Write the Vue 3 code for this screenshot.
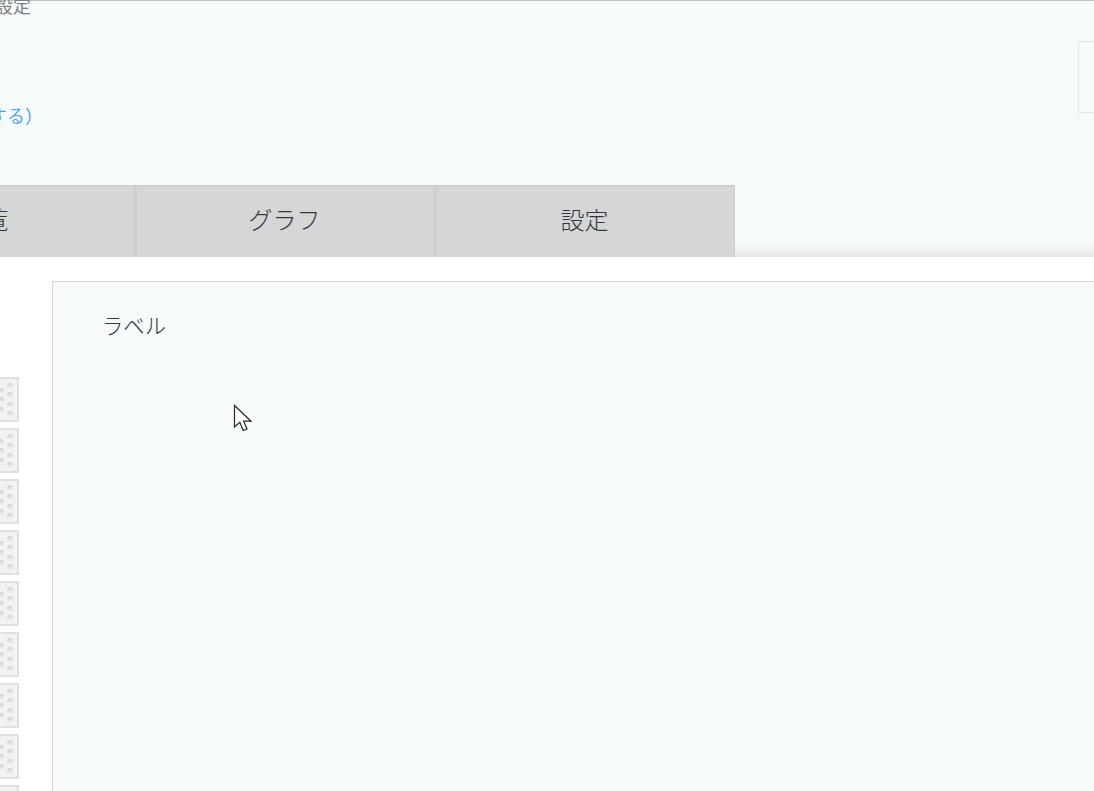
<script setup>
const handles = Array.from({ length: 9 }, (_, i) => i)
const leftDots = [0, 1, 2]
const rightDots = [0, 1, 2, 3]
const tabs = ['一覧', 'グラフ', '設定']
</script>

<template>
  <div class="page">
    <header class="header">
      <div class="top">
        <div class="info">
          <div class="setting">設定</div>
          <a class="link">変更する）</a>
        </div>
        <div class="box"></div>
      </div>
      <nav class="tabs">
        <div v-for="t in tabs" :key="t" class="tab"><span class="tab-text">{{ t }}</span></div>
      </nav>
    </header>
    <main class="body">
      <aside class="side">
        <div v-for="h in handles" :key="h" class="handle">
          <div class="col col-left"><span v-for="d in leftDots" :key="d" class="dot"></span></div>
          <div class="col"><span v-for="d in rightDots" :key="d" class="dot"></span></div>
        </div>
      </aside>
      <section class="panel">
        <div class="label">ラベル</div>
      </section>
    </main>
    <svg class="cursor" width="20" height="29" viewBox="0 0 20 29">
      <path d="M1.5 1.5V23L6.8 18.2L10.2 26.5L14 25L10.6 17.2H18Z" fill="#fff" stroke="#23262c" stroke-width="1.2" stroke-linejoin="miter"/>
    </svg>
  </div>
</template>

<style scoped>
.page {
  position: relative;
  width: 1094px;
  height: 791px;
  overflow: hidden;
  background: #fff;
  font-family: "Noto Sans CJK JP", "Noto Sans", sans-serif;
  font-weight: 300;
  color: #33363e;
}
.header {
  box-sizing: border-box;
  height: 257px;
  border-top: 1px solid #bfc2c2;
  background: linear-gradient(to bottom, #f6fafb 0, #f6fafb 240px, #e7e7e9 256px);
  display: flex;
  flex-direction: column;
  justify-content: space-between;
}
.top {
  display: flex;
  justify-content: space-between;
  height: 112px;
}
.info {
  margin-left: -80px;
  width: 113px;
  text-align: right;
}
.setting {
  font-size: 18px;
  line-height: 20px;
  margin-top: -6px;
  padding-right: 2px;
  color: #7e8183;
  font-weight: 400;
}
.link {
  display: block;
  margin-top: 90px;
  margin-right: -10px;
  font-size: 18px;
  line-height: 20px;
  white-space: nowrap;
  color: #5ba3d9;
  font-weight: 400;
}
.box {
  box-sizing: border-box;
  width: 30px;
  height: 72px;
  margin-top: 40px;
  margin-right: -14px;
  border: 1px solid #e3e6e7;
  background: #f8fbfc;
}
.tabs {
  display: flex;
  margin-left: -165px;
  height: 72px;
}
.tab {
  box-sizing: border-box;
  width: 300px;
  height: 72px;
  display: flex;
  align-items: center;
  justify-content: center;
  font-size: 24px;
  background: #d5d7d7;
  border-top: 1px solid #c8caca;
  border-right: 1px solid #c9cbcd;
  box-shadow: inset 3px 0 3px -1px #cbced2;
  color: #33363e;
}
.tab-text {
  margin-top: -6px;
}
.body {
  display: flex;
  height: 534px;
}
.side {
  margin-left: -26px;
  width: 78px;
  flex: none;
  padding-top: 120px;
  display: flex;
  flex-direction: column;
  gap: 6px;
}
.handle {
  box-sizing: border-box;
  width: 45px;
  height: 45px;
  flex: none;
  background: #f1f2f2;
  border: 2px solid #dfe0e0;
  display: flex;
  justify-content: flex-end;
  align-items: flex-start;
  gap: 3px;
  padding-right: 4px;
  padding-top: 4px;
}
.col {
  display: flex;
  flex-direction: column;
  gap: 3.3px;
}
.col-left {
  margin-top: 5px;
}
.dot {
  display: block;
  width: 6px;
  height: 6px;
  border-radius: 3px 3px 0 0;
  background: linear-gradient(to bottom, #cfd0d0, #f1f2f2);
}
.panel {
  flex: 1;
  margin-top: 24px;
  margin-bottom: -10px;
  border: 1px solid #d5d7d7;
  border-right: none;
  background: #f6fafb;
  padding: 27px 50px;
}
.label {
  font-size: 21.33px;
  line-height: 32px;
  margin-left: -1px;
  color: #33363e;
}
.cursor {
  position: absolute;
  left: 233px;
  top: 404px;
}
</style>
